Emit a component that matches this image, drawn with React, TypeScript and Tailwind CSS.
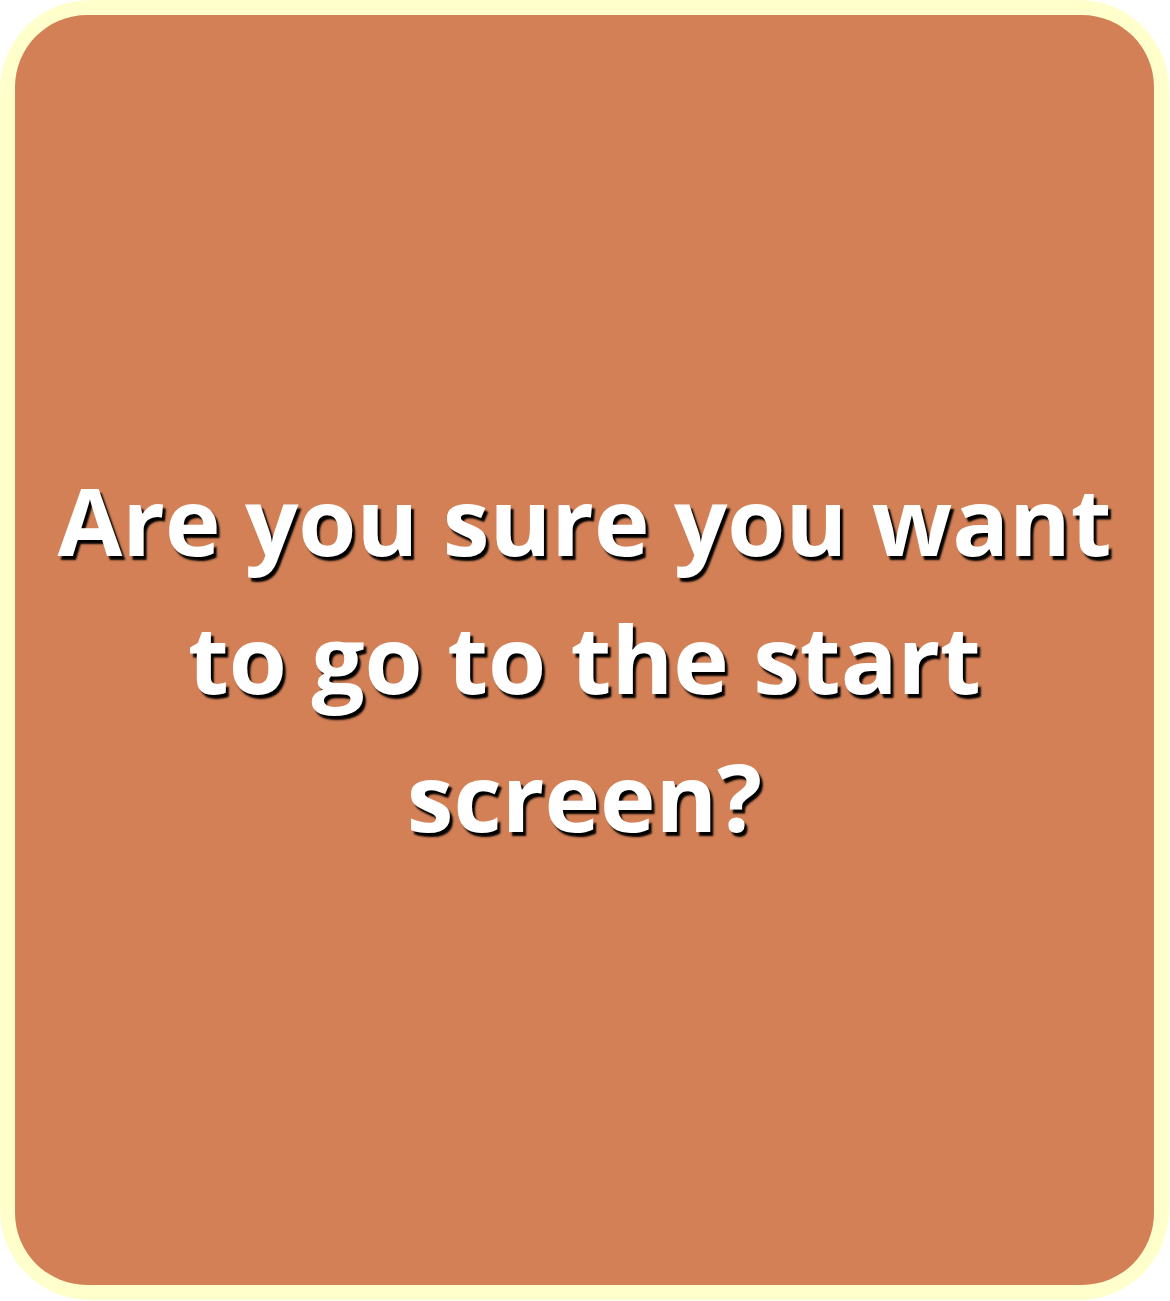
export default function App() {
  return (
    <div className="w-[1170px] h-[1301px] bg-white">
      <div className="w-[1169px] h-[1300px] rounded-[90px] bg-[#ffffcc] p-[15px]">
        <div className="h-full rounded-[72px] bg-[#d38056] flex items-center justify-center px-4">
          <p
            className="text-center text-white font-bold text-[94px] leading-[138px] [text-shadow:3px_4px_2px_#000] pt-4"
            style={{ fontFamily: '"Open Sans", "Noto Sans", sans-serif' }}
          >
            Are you sure you want
            <br />
            to go to the start
            <br />
            screen?
          </p>
        </div>
      </div>
    </div>
  );
}
